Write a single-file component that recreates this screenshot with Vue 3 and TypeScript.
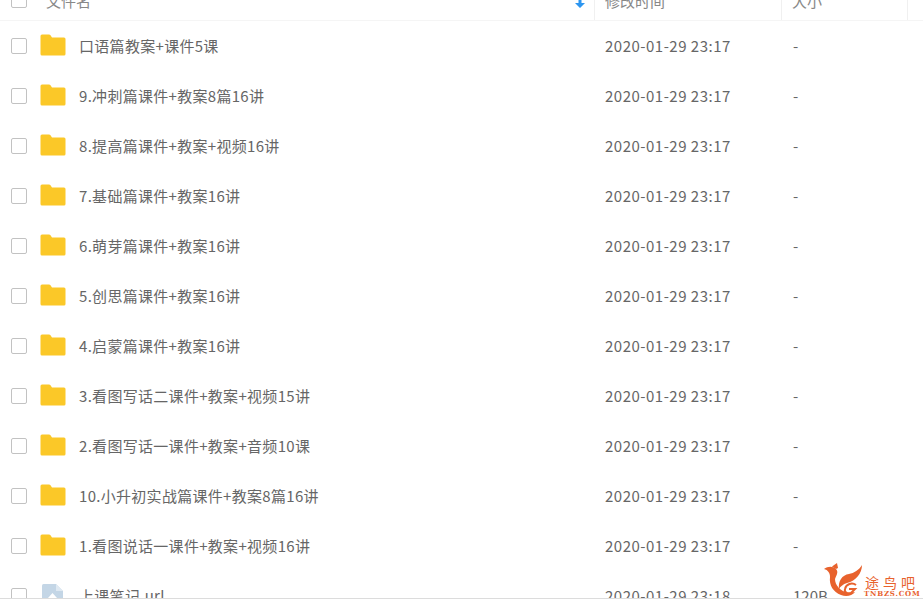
<script setup lang="ts">
interface Row { name: string; time: string; size: string; kind: 'folder' | 'file' }
const names = [
  '口语篇教案+课件5课',
  '9.冲刺篇课件+教案8篇16讲',
  '8.提高篇课件+教案+视频16讲',
  '7.基础篇课件+教案16讲',
  '6.萌芽篇课件+教案16讲',
  '5.创思篇课件+教案16讲',
  '4.启蒙篇课件+教案16讲',
  '3.看图写话二课件+教案+视频15讲',
  '2.看图写话一课件+教案+音频10课',
  '10.小升初实战篇课件+教案8篇16讲',
  '1.看图说话一课件+教案+视频16讲',
]
const rows: Row[] = [
  ...names.map((name): Row => ({ name, time: '2020-01-29 23:17', size: '-', kind: 'folder' })),
  { name: '上课笔记.url', time: '2020-01-29 23:18', size: '120B', kind: 'file' },
]
</script>

<template>
  <div class="page">
    <div class="head">
      <span class="check"></span>
      <span class="h-name">文件名</span>
      <svg class="sort" width="10" height="9" viewBox="0 0 10 9"><path d="M3.500 0h3v4H10L5 9 0 4h3.500z" fill="#2d96f0" /></svg>
      <span class="h-time">修改时间</span>
      <span class="h-size">大小</span>
      <span class="h-end"></span>
    </div>
    <div v-for="row in rows" :key="row.name" class="row">
      <span class="check"></span>
      <svg v-if="row.kind === 'folder'" class="icon" width="26" height="22" viewBox="0 0 26 22">
        <path d="M0.500 2A1.500 1.500 0 0 1 2 .5h7a2 2 0 0 1 1.500.7L12 3.500h12a1.500 1.500 0 0 1 1.500 1.500V20a1.500 1.500 0 0 1-1.500 1.500H2A1.500 1.500 0 0 1 .5 20z" fill="#fbc828" />
      </svg>
      <svg v-else class="icon" width="26" height="22" viewBox="0 0 26 22">
        <path d="M2 1.500A1.500 1.500 0 0 1 3.500 0H16l7 7v15H2z" fill="#c4d6e6" />
        <path d="M16 0l7 7h-7z" fill="#dfe9f2" />
        <path d="M12.500 9l4.500 5H8z" fill="#fff" />
      </svg>
      <span class="name">{{ row.name }}</span>
      <span class="time">{{ row.time }}</span>
      <span class="size">{{ row.size }}</span>
    </div>
    <div class="mark">
      <svg class="mark-logo" width="42" height="35" viewBox="0 0 42 35">
        <path d="M2 6C6 3 11 3 14 6c3 3 0 7-1 10 0 6 5 12 13 14l7-1c-3 4-9 5-14 3C11 29 7 22 8 14 8 10 6 7 2 6z" fill="#e8622d" />
        <path d="M10 3.500 15 0l1 5-2 1z" fill="#e8622d" />
        <path d="M40 2c0 8-6 16-15 18-4 1-7 4-8 6-1-8 3-14 10-15 5-1 10-4 13-9z" fill="#e8622d" />
        <path d="M34 22c-4-3-10-1-11 4-1 3 2 5 6 4l4-4h-6" fill="none" stroke="#e8622d" stroke-width="2" />
      </svg>
      <div class="mark-text">
        <span class="mark-cn">途鸟吧</span>
        <span class="mark-en">TNBZS.COM</span>
      </div>
    </div>
  </div>
</template>

<style>
html, body { margin: 0; background: #fff; }
</style>

<style scoped>
.page {
  position: relative;
  width: 923px;
  height: 599px;
  overflow: hidden;
  box-sizing: border-box;
  border-bottom: 1px solid #dcdcdc;
  background: #fff;
  color: #666;
  font-family: "Noto Sans CJK SC", "Noto Sans", sans-serif;
  font-size: 15px;
}
.head {
  display: flex;
  align-items: center;
  height: 41px;
  margin-top: -20px;
  box-sizing: border-box;
  border-bottom: 1px solid #f5f5f5;
  color: #888;
}
.h-name { margin-left: 19px; width: 530px; flex: none; }
.sort { flex: none; margin: 6px 0 0 -1px; }
.h-time, .h-size, .h-end { flex: none; height: 100%; box-sizing: border-box; border-left: 1px solid #f0f0f0; display: flex; align-items: center; }
.h-time { margin-left: 9px; width: 187px; padding-left: 10px; }
.h-size { width: 126px; padding-left: 10px; }
.h-end { width: 16px; }
.row {
  display: flex;
  align-items: center;
  height: 50px;
  flex: none;
}
.check {
  flex: none;
  width: 16px;
  height: 16px;
  box-sizing: border-box;
  margin-left: 11px;
  border: 1px solid #c2c2c2;
  border-radius: 2px;
  background: #fff;
}
.icon { flex: none; margin-left: 13px; margin-top: -2px; }
.name { flex: none; width: 526px; margin-left: 13px; margin-top: -2px; white-space: nowrap; letter-spacing: 0.3px; }
.time { flex: none; width: 189px; margin-top: -2px; letter-spacing: 0.5px; }
.size { flex: none; margin-left: -1px; margin-top: -2px; }
.mark {
  position: absolute;
  left: 822px;
  top: 563px;
  display: flex;
  align-items: flex-start;
  color: #e8622d;
}
.mark-text { display: flex; flex-direction: column; margin: 11px 0 0 0; }
.mark-cn { font-size: 14px; letter-spacing: 4px; line-height: 16px; height: 16px; padding-left: 1px; font-family: "Noto Sans CJK SC", sans-serif; }
.mark-en { font-family: "DejaVu Serif", serif; font-size: 7px; font-weight: 700; line-height: 8px; letter-spacing: 0.8px; }
</style>
